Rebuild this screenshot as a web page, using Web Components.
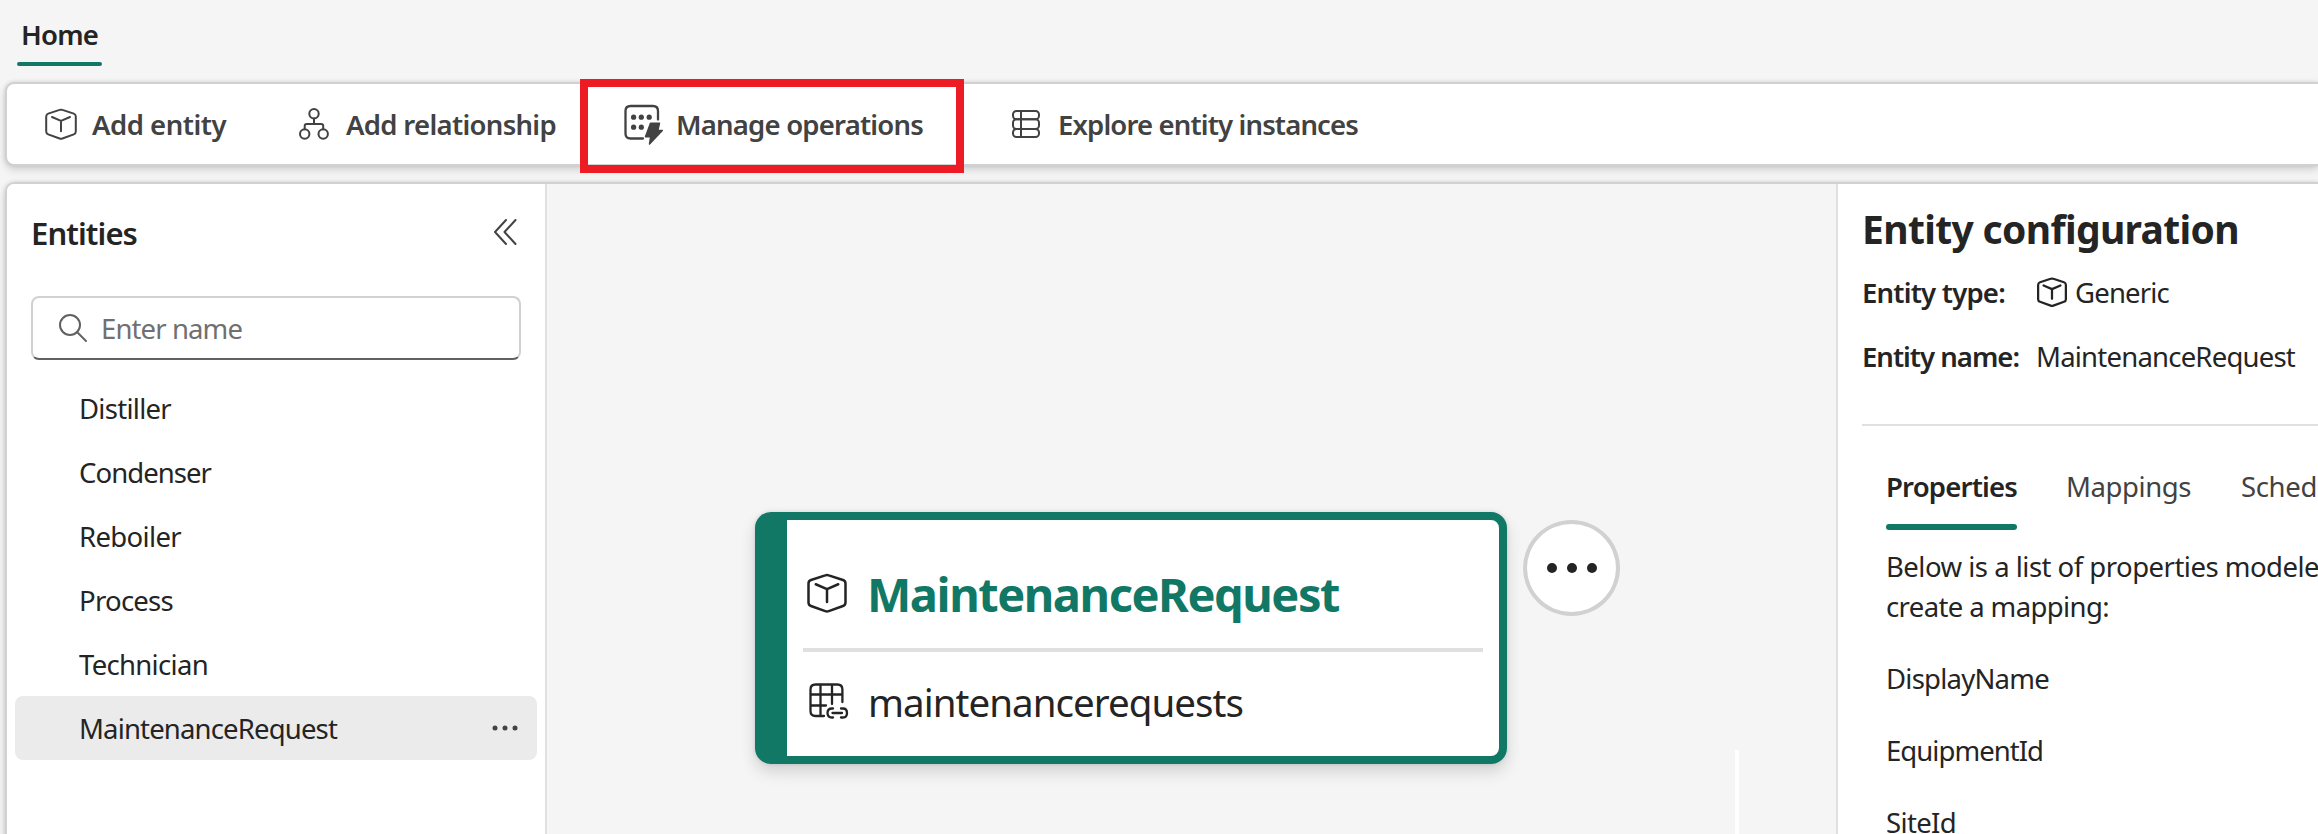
<!DOCTYPE html>
<html lang="en">
<head>
<meta charset="utf-8">
<title>Entity builder</title>
<style>
html,body{margin:0;height:100%;overflow:hidden;background:#f5f5f5;font-family:"Noto Sans","Open Sans",sans-serif;color:#242424}
</style>
</head>
<body>
<entity-app></entity-app>
<script>
const ICONS = {
  cube: ['0 0 32 32', '<path d="M14.6 1.9 3.2 5.6Q1.2 6.300 1.200 8.400V23.600Q1.200 25.700 3.200 26.400L14.600 30.500Q16 31 17.400 30.500L28.800 26.400Q30.800 25.700 30.800 23.600V8.400Q30.800 6.300 28.800 5.600L17.400 1.900Q16 1.400 14.600 1.900ZM7 9 16 12.900 25 9M16 12.900V23.200"/>'],
  tree: ['0 0 32 34', '<circle cx="16" cy="6.700" r="4.700"/><circle cx="6.700" cy="27" r="4.700"/><circle cx="25.200" cy="27" r="4.700"/><path d="M16 11.400V17M6.700 22.300V19Q6.700 17 8.700 17H23.200Q25.200 17 25.200 19V22.300"/>'],
  ops: ['0 0 40 42', '<path d="M34 15.500V7Q34 2 29 2H6.500Q1.500 2 1.500 7V29.500Q1.500 34.500 6.500 34.500H19"/><g fill="currentColor" stroke="none"><circle cx="9.600" cy="13.200" r="2.600"/><circle cx="17.300" cy="13.200" r="2.600"/><circle cx="25.200" cy="13.200" r="2.600"/><circle cx="9.600" cy="23.200" r="2.600"/><circle cx="17.300" cy="23.200" r="2.600"/></g><path fill="currentColor" stroke-width="1.500" d="M26.500 19.200H35.500L33.800 26.500H38.300L25.500 40L26.700 32.700H21.500Z"/>'],
  rows: ['0 0 30 30', '<rect x="2" y="2" width="26" height="8.300" rx="3.500"/><rect x="2" y="10.300" width="26" height="9.700" rx="3.500"/><rect x="2" y="20" width="26" height="8" rx="3.500"/><path d="M10 2V28"/>'],
  collapse: ['0 0 24 26', '<path d="M13 1 2 13 13 25M22.500 1 11.500 13 22.500 25"/>'],
  search: ['0 0 30 30', '<circle cx="12" cy="12" r="10"/><path d="M19 19 28 28"/>'],
  table: ['0 0 40 38', '<path d="M33.400 19V6.500Q33.400 1.500 28.400 1.500H6.500Q1.500 1.500 1.500 6.500V28Q1.500 33 6.500 33H15M1.500 11.500H33.400M1.500 22.500H17M11.500 1.500V33M23 1.500V21M24 25.500H23Q18.500 25.500 18.500 30T23 34.500H24M32 25.500H34Q38 25.500 38 30T34 34.500H32M23.500 30H33"/>'],
  more: ['0 0 26 8', '<g fill="currentColor" stroke="none"><circle cx="3" cy="4" r="2.500"/><circle cx="13" cy="4" r="2.500"/><circle cx="23" cy="4" r="2.500"/></g>']
};
const define = (name, html, setup) => customElements.define(name, class extends HTMLElement {
  constructor(){ super(); this.attachShadow({mode:'open'}).innerHTML = html; }
  connectedCallback(){ if (setup) setup(this, this.shadowRoot); }
});
define('ui-icon', '<style>:host{display:block;flex:none}svg{display:block;width:100%;height:100%;fill:none;stroke:currentColor;stroke-linecap:round;stroke-linejoin:round;overflow:visible}</style><svg></svg>', (el, root) => {
  const [box, body] = ICONS[el.getAttribute('name')];
  const svg = root.querySelector('svg');
  svg.setAttribute('viewBox', box);
  svg.setAttribute('stroke-width', el.getAttribute('stroke') || 2);
  svg.innerHTML = body;
  el.style.width = el.getAttribute('w') + 'px';
  el.style.height = el.getAttribute('h') + 'px';
});
/* A one-line label whose tracking is set so that it fills the width in "w". */
define('ui-text', '<style>:host{display:block;flex:none;white-space:nowrap}span{display:inline-block}</style><span><slot></slot></span>', (el, root) => {
  const span = root.querySelector('span');
  const w = +el.getAttribute('w');
  const natural = span.getBoundingClientRect().width;
  span.style.letterSpacing = ((w - natural) / el.textContent.length) + 'px';
  el.style.width = w + 'px';
});
define('top-tabs', `<style>:host{display:block;height:82px;box-sizing:border-box;padding:12px 0 0 17px}
.tab{width:85px;height:54px;display:flex;flex-direction:column;justify-content:space-between;align-items:center;font:600 27.500px/46px "Noto Sans",sans-serif}
i{display:block;width:85px;height:4px;border-radius:2px;background:#117865}</style><div class="tab"><ui-text w="77">Home</ui-text><i></i></div>`);
define('tool-button', `<style>:host{display:flex;align-items:center;height:80px;box-sizing:border-box;color:#424242;font:600 27.500px/40px "Noto Sans",sans-serif}</style><slot></slot>`);
define('tool-bar', `<style>:host{display:flex;box-sizing:border-box;height:84px;margin-left:5px;border:2px solid #d1d1d1;border-right:0;border-radius:9px 0 0 9px;background:#fff;box-shadow:0 4px 8px rgba(0,0,0,.14),0 0 4px rgba(0,0,0,.12);padding-left:38px}
ui-text{padding-top:2px}
.a{width:253px;gap:15px}.b{width:273px;gap:16px}
.c{width:384px;height:94px;margin:-5px 0 0 9px;padding:0 0 0 44px;gap:12px;box-shadow:inset 0 0 0 8px #ed1c24}.d{margin-left:47px;gap:17px}
.c ui-text{padding:0 0 2px}.c ui-icon{margin-bottom:2px}
</style>
<tool-button class="a"><ui-icon name="cube" w="32" h="32"></ui-icon><ui-text w="134">Add entity</ui-text></tool-button>
<tool-button class="b"><ui-icon name="tree" w="32" h="34"></ui-icon><ui-text w="210">Add relationship</ui-text></tool-button>
<tool-button class="c"><ui-icon name="ops" w="40" h="42" stroke="2.300"></ui-icon><ui-text w="247">Manage operations</ui-text></tool-button>
<tool-button class="d"><ui-icon name="rows" w="30" h="30"></ui-icon><ui-text w="300">Explore entity instances</ui-text></tool-button>`);
define('entity-row', `<style>:host{display:flex;align-items:center;justify-content:space-between;box-sizing:border-box;height:64px;margin:0 8px;padding:0 19px 0 64px;border-radius:8px;font:400 27.500px/40px "Noto Sans",sans-serif}
:host([selected]){background:#ebebeb}::slotted(ui-text){padding-top:2px}</style><slot></slot>`);
define('entity-sidebar', `<style>:host{display:block;box-sizing:border-box;width:540px;border-right:2px solid #e0e0e0;background:#fff}
header{display:flex;justify-content:space-between;align-items:center;height:98px;padding:0 28px 0 24px;font:600 31px/44px "Noto Sans",sans-serif}
header ui-icon{color:#424242;margin-bottom:2px}
.search{display:flex;align-items:center;gap:13px;box-sizing:border-box;height:64px;margin:14px 24px 16px 24px;padding:0 25px;border:2px solid #d1d1d1;border-bottom-color:#616161;border-radius:8px;color:#707070;font:400 27.500px/40px "Noto Sans",sans-serif}
.search ui-icon{color:#616161}.search ui-text{padding-top:2px}</style>
<header><ui-text w="106">Entities</ui-text><ui-icon name="collapse" w="24" h="26"></ui-icon></header>
<div class="search"><ui-icon name="search" w="30" h="30"></ui-icon><ui-text w="141">Enter name</ui-text></div>
<entity-row><ui-text w="92">Distiller</ui-text></entity-row>
<entity-row><ui-text w="132">Condenser</ui-text></entity-row>
<entity-row><ui-text w="102">Reboiler</ui-text></entity-row>
<entity-row><ui-text w="94">Process</ui-text></entity-row>
<entity-row><ui-text w="129">Technician</ui-text></entity-row>
<entity-row selected><ui-text w="258">MaintenanceRequest</ui-text><ui-icon name="more" w="26" h="8" style="color:#424242"></ui-icon></entity-row>`);
define('entity-node', `<style>:host{display:block;box-sizing:border-box;width:752px;height:252px;border:8px solid #117865;border-left-width:32px;border-radius:16px;background:#fff;box-shadow:0 8px 16px rgba(0,0,0,.14),0 0 4px rgba(0,0,0,.12);padding:0 16px}
.head{display:flex;align-items:center;gap:20px;height:132px;box-sizing:border-box;padding:20px 0 0 4px;border-bottom:4px solid #e0e0e0;color:#242424}
.head ui-text{font:700 47px/64px "Noto Sans",sans-serif;color:#117865}
.head ui-icon{margin-top:-3px}
.body{display:flex;align-items:center;gap:19px;height:104px;box-sizing:border-box;padding:0 0 4px 6px;font:400 38.500px/54px "Noto Sans",sans-serif}
.body ui-icon{margin-bottom:0}</style>
<div class="head"><ui-icon name="cube" w="40" h="40"></ui-icon><ui-text w="472">MaintenanceRequest</ui-text></div>
<div class="body"><ui-icon name="table" w="40" h="38" stroke="2.300"></ui-icon><ui-text w="375">maintenancerequests</ui-text></div>`);
define('entity-canvas', `<style>:host{display:block;position:relative;flex:1;background:#f5f5f5;overflow:hidden}
entity-node{position:absolute;left:208px;top:328px}
.more{position:absolute;left:976px;top:336px;width:97px;height:96px;box-sizing:border-box;border:4px solid #d1d1d1;border-radius:50%;background:#fff;display:flex;align-items:center;justify-content:center}
.edge{position:absolute;left:1188px;top:566px;bottom:0;width:4px;background:#fff}</style>
<entity-node></entity-node><div class="more"><ui-icon name="more" w="52" h="16"></ui-icon></div><div class="edge"></div>`);
define('entity-config', `<style>:host{display:block;box-sizing:border-box;width:482px;flex:none;border-left:2px solid #e0e0e0;background:#fff;padding:17px 0 0 24px;overflow:hidden;font:400 27.500px/40px "Noto Sans",sans-serif}
.title{font:700 39px/56px "Noto Sans",sans-serif}
.field{display:flex;align-items:center;height:64px}.field.first{margin-top:4px}
.label{font-weight:600;width:174px}.field ui-icon{margin:-3px 8px 0 1px}
.rule{height:2px;background:#e0e0e0;margin-top:35px}
.tabs{display:flex;height:104px;box-sizing:border-box;padding:41px 0 0 24px;color:#424242}
.tab{width:131px;height:63px;display:flex;flex-direction:column;justify-content:space-between;margin-right:49px;font-weight:600;color:#242424}
.tab i{height:6px;border-radius:3px;background:#117865}
.map{margin-right:50px}
.list{padding:17px 0 0 24px}.list .p{height:72px;display:flex;align-items:center}.list .f{margin-top:16px}</style>
<ui-text class="title" w="377">Entity configuration</ui-text>
<div class="field first"><div class="label"><ui-text w="143">Entity type:</ui-text></div><ui-icon name="cube" w="30" h="30" stroke="2.400"></ui-icon><ui-text w="94">Generic</ui-text></div>
<div class="field"><div class="label"><ui-text w="157">Entity name:</ui-text></div><ui-text w="259">MaintenanceRequest</ui-text></div>
<div class="rule"></div>
<div class="tabs"><div class="tab"><ui-text w="131">Properties</ui-text><i></i></div><ui-text class="map" w="125">Mappings</ui-text><ui-text w="76">Sched</ui-text></div>
<div class="list"><ui-text w="433">Below is a list of properties modele</ui-text><ui-text w="223">create a mapping:</ui-text>
<div class="p f"><ui-text w="163">DisplayName</ui-text></div><div class="p"><ui-text w="157">EquipmentId</ui-text></div><div class="p"><ui-text w="70">SiteId</ui-text></div></div>`);
define('entity-app', `<style>:host{display:flex;flex-direction:column;width:2318px;height:834px;overflow:hidden;background:#f5f5f5}
main{display:flex;flex:1;min-height:0;box-sizing:border-box;margin:16px 0 -20px 5px;border:2px solid #d1d1d1;border-right:0;border-radius:9px 0 0 9px;box-shadow:0 4px 8px rgba(0,0,0,.14),0 0 4px rgba(0,0,0,.12)}
entity-sidebar{flex:none;border-top-left-radius:7px}tool-bar{flex:none;position:relative;z-index:1}top-tabs{flex:none}</style>
<top-tabs></top-tabs><tool-bar></tool-bar><main><entity-sidebar></entity-sidebar><entity-canvas></entity-canvas><entity-config></entity-config></main>`);
</script>
</body>
</html>
